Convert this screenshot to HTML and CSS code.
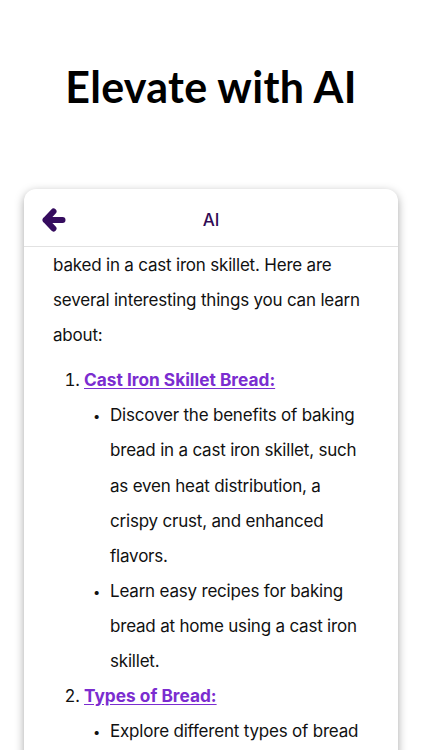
FILE: index.html
```html
<!DOCTYPE html>
<html lang="en">
<head>
<meta charset="utf-8">
<title>Elevate with AI</title>
<link rel="stylesheet" href="styles.css">
</head>
<body>
<div class="page">
  <h1 class="hero">Elevate with AI</h1>
  <section class="card">
    <header class="card-header">
      <button class="back" aria-label="Back">
        <svg width="24" height="24" viewBox="0 0 24 24" fill="none" stroke="currentColor" stroke-width="6" stroke-linecap="round" stroke-linejoin="round"><path d="M11.5 3.5 L3.5 12 L11.5 20.5 M3.5 12 H20.5"/></svg>
      </button>
      <span class="card-title">AI</span>
      <span></span>
    </header>
    <div class="content">
      <p>baked in a cast iron skillet. Here are several interesting things you can learn about:</p>
      <ol class="topics">
        <li>
          <a href="#">Cast Iron Skillet Bread:</a>
          <ul class="points">
            <li>Discover the benefits of baking bread in a cast iron skillet, such as even heat distribution, a crispy crust, and enhanced flavors.</li>
            <li>Learn easy recipes for baking bread at home using a cast iron skillet.</li>
          </ul>
        </li>
        <li>
          <a href="#">Types of Bread:</a>
          <ul class="points">
            <li>Explore different types of bread that can be baked in a skillet, from cornbread to focaccia.</li>
          </ul>
        </li>
      </ol>
    </div>
  </section>
</div>
</body>
</html>
```
FILE: styles.css
```css
html, body {
  margin: 0;
  padding: 0;
  background: #ffffff;
}
body {
  height: 750px;
  overflow: hidden;
  font-family: Inter, "Liberation Sans", sans-serif;
  color: #111111;
}
.page {
  display: flex;
  flex-direction: column;
}
.hero {
  margin: 61px 0 0;
  font-family: Lato, "Open Sans", sans-serif;
  font-weight: 700;
  font-size: 43px;
  line-height: 52px;
  text-align: center;
  color: #000;
  letter-spacing: 0.3px;
}
.card {
  margin: 76px 24px 0;
  background: #fff;
  border-radius: 12px 12px 0 0;
  box-shadow: 0 3px 10px rgba(0, 0, 0, 0.35);
  min-height: 700px;
}
.card-header {
  height: 58px;
  display: grid;
  grid-template-columns: 1fr auto 1fr;
  align-items: center;
  padding: 4px 18px 0;
  box-sizing: border-box;
  border-bottom: 1px solid #e2e2e2;
  color: #300b55;
}
.back {
  justify-self: start;
  display: flex;
  padding: 0;
  border: 0;
  background: none;
  color: #350c5e;
}
.card-title {
  font-size: 17px;
  font-weight: 500;
}
.content {
  padding: 1px 29px 0;
  font-size: 17px;
  letter-spacing: -0.2px;
  line-height: 35.1px;
}
.content p {
  margin: 0 0 10px;
}
.topics {
  margin: 0;
  padding-left: 31px;
}
.topics a {
  color: #7b2dd0;
  font-size: 17.3px;
  line-height: 34px;
  letter-spacing: 0;
  font-weight: 700;
  text-decoration: underline;
  text-underline-offset: 2px;
}
.points {
  margin: 0;
  padding-left: 26px;
}
.points li {
  list-style-type: "•  ";
}
.points li::marker {
  content: "•   ";
  font-size: 13px;
}
```
